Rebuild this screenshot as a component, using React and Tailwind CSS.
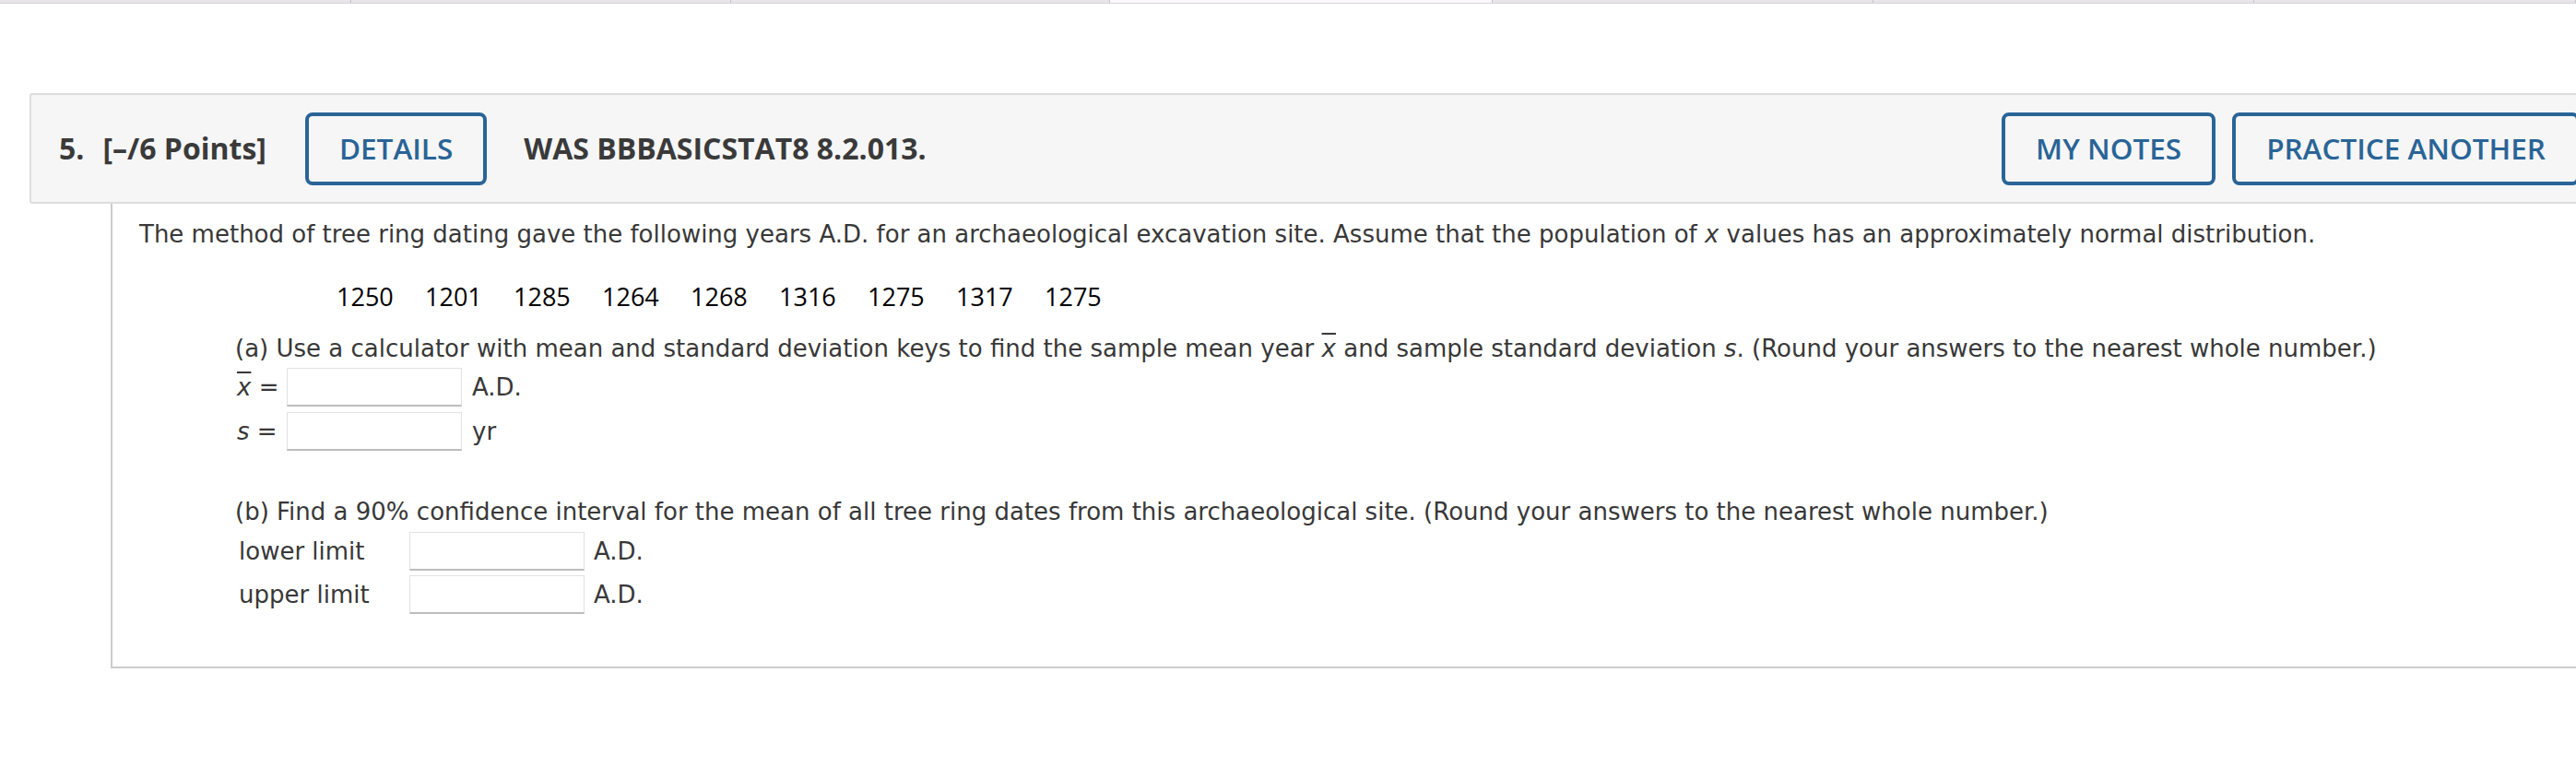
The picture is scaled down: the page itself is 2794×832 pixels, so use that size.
const tabs = [381, 412, 411, 415, 413, 413, 349];

const Tabs = () => (
  <div className="flex h-[4px] border-b border-[#d9d5dc]">
    {tabs.map((w, i) => (
      <div
        key={i}
        style={{ width: w }}
        className={
          i === 3
            ? "h-full bg-[#fbf8fb] border-r border-[#c8c4cb]"
            : "h-full bg-[#e7e4ea] border-r border-[#c8c4cb]"
        }
      />
    ))}
  </div>
);

const OutlineButton = ({ children }) => (
  <button className="h-[79px] px-[33px] border-4 border-[#2a6496] rounded-[8px] text-[#2a6496] text-[31.5px] font-semibold font-['Open_Sans',sans-serif] leading-none whitespace-nowrap">
    {children}
  </button>
);

const AnswerBox = () => (
  <input
    type="text"
    className="w-[190px] h-[42px] bg-white border border-[#e2e2e2] border-b-2 border-b-[#bdbdbd] outline-none"
  />
);

const Row = ({ label, labelWidth, unit, unitGap }) => (
  <div className="flex items-center h-[42px]">
    <div style={{ width: labelWidth }} className="leading-[42px] whitespace-nowrap">
      {label}
    </div>
    <AnswerBox />
    <div style={{ marginLeft: unitGap }} className="leading-[42px]">
      {unit}
    </div>
  </div>
);

const years = [1250, 1201, 1285, 1264, 1268, 1316, 1275, 1317, 1275];

export default function App() {
  return (
    <div className="w-full h-[832px] overflow-hidden bg-white">
      <Tabs />

      <div className="pt-[97px] pl-[32px] w-[2870px]">
        {/* Header */}
        <div className="h-[120px] w-[2806px] flex items-center pl-[30px] pr-[38px] bg-[#f6f6f6] border-2 border-[#dddddd] rounded-[3px] font-['Open_Sans',sans-serif] text-[#3a3a3a]">
          <span className="text-[32px] font-bold">5.</span>
          <span className="text-[32px] font-bold ml-[20px]">[–/6 Points]</span>
          <div className="ml-[42px]">
            <OutlineButton>DETAILS</OutlineButton>
          </div>
          <span className="text-[32px] font-bold ml-[40px]">
            WAS BBBASICSTAT8 8.2.013.
          </span>
          <div className="ml-auto flex gap-[18px]">
            <OutlineButton>MY NOTES</OutlineButton>
            <OutlineButton>PRACTICE ANOTHER</OutlineButton>
          </div>
        </div>

        {/* Question body */}
        <div className="ml-[88px] w-[2718px] h-[504px] border-l-2 border-b-2 border-[#cccccc] pl-[29px] pt-[13px] font-['DejaVu_Sans',Verdana,sans-serif] text-[26px] text-[#383838]">
          <p className="leading-[40px] whitespace-nowrap">
            The method of tree ring dating gave the following years A.D. for an
            archaeological excavation site. Assume that the population of{" "}
            <i>x</i> values has an approximately normal distribution.
          </p>

          <div className="mt-[28px] pl-[214px] flex font-['Open_Sans',sans-serif] text-[27px] text-black leading-[40px]">
            {years.map((y, i) => (
              <span key={i} className="w-[96px]">
                {y}
              </span>
            ))}
          </div>

          <div className="pl-[104px]">
            <p className="mt-[16px] leading-[40px] whitespace-nowrap">
              (a) Use a calculator with mean and standard deviation keys to find
              the sample mean year <i className="overline">x</i> and sample
              standard deviation <i>s</i>. (Round your answers to the nearest
              whole number.)
            </p>
            <div className="mt-[1px] flex flex-col gap-[6px]">
              <Row
                label={
                  <span className="pl-[2px]">
                    <i className="overline">x</i> =
                  </span>
                }
                labelWidth={56}
                unit="A.D."
                unitGap={11}
              />
              <Row
                label={
                  <span className="pl-[2px]">
                    <i>s</i> =
                  </span>
                }
                labelWidth={56}
                unit="yr"
                unitGap={11}
              />
            </div>

            <p className="mt-[46px] leading-[40px] whitespace-nowrap">
              (b) Find a 90% confidence interval for the mean of all tree ring
              dates from this archaeological site. (Round your answers to the
              nearest whole number.)
            </p>
            <div className="mt-[2px] flex flex-col gap-[5px]">
              <Row
                label={<span className="pl-[4px]">lower limit</span>}
                labelWidth={189}
                unit="A.D."
                unitGap={10}
              />
              <Row
                label={<span className="pl-[4px]">upper limit</span>}
                labelWidth={189}
                unit="A.D."
                unitGap={10}
              />
            </div>
          </div>
        </div>
      </div>
    </div>
  );
}
